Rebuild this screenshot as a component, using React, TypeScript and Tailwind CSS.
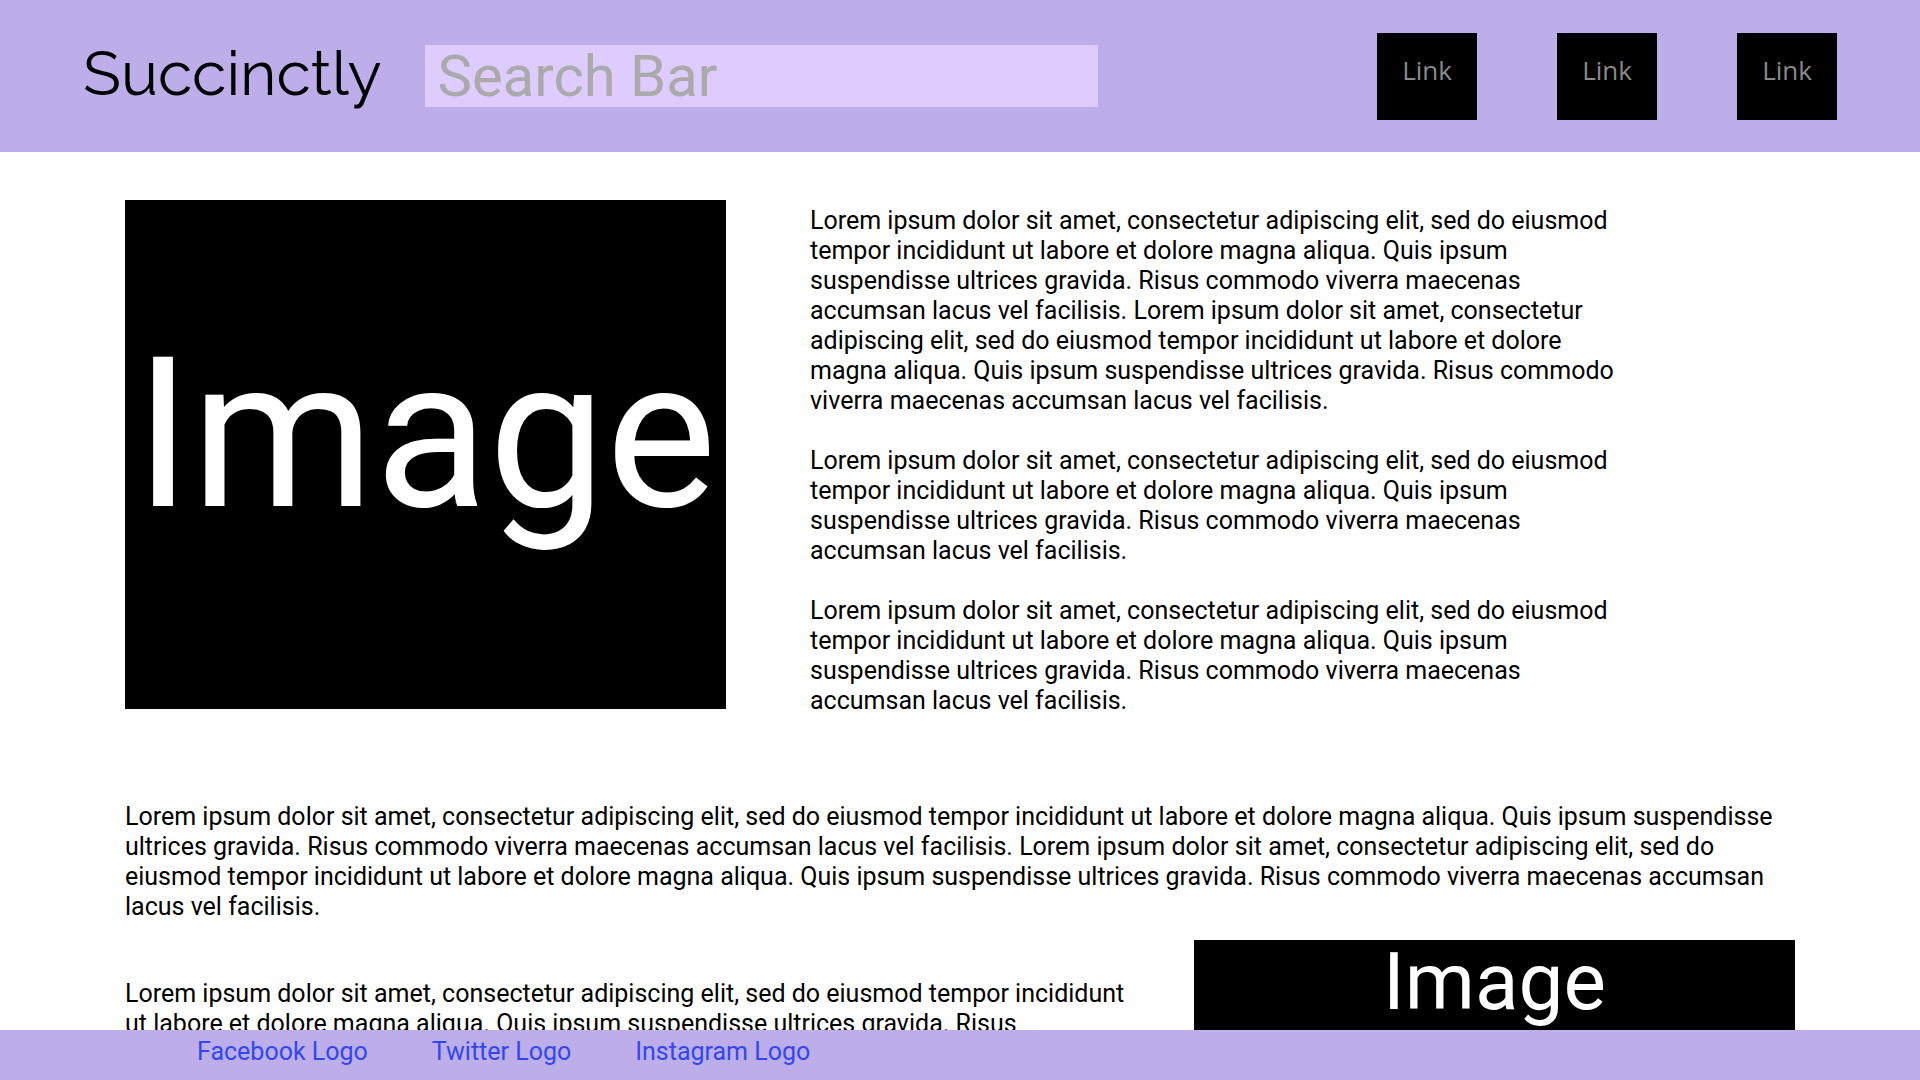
const lorem =
  'Lorem ipsum dolor sit amet, consectetur adipiscing elit, sed do eiusmod tempor incididunt ut labore et dolore magna aliqua. Quis ipsum suspendisse ultrices gravida. Risus commodo viverra maecenas accumsan lacus vel facilisis.';

const Header = () => (
  <header className="flex items-center h-[152px] bg-[#bdaeea] px-[83px]">
    <h1 className="font-['Raleway','Lato',sans-serif] font-normal text-[62.5px] leading-none text-black pb-[6px]">
      Succinctly
    </h1>
    <input
      placeholder="Search Bar"
      className="ml-[43px] w-[673px] h-[62px] bg-[#ddccfd] px-[13px] font-['Roboto',sans-serif] text-[58px] placeholder:text-[#aaaaaa] outline-none"
    />
    <nav className="ml-auto flex gap-[80px]">
      {['Link', 'Link', 'Link'].map((label, i) => (
        <a
          key={i}
          href="#"
          className="flex w-[100px] h-[87px] items-center justify-center bg-black pb-[12px] font-['Open_Sans',sans-serif] text-[26px] text-[#8a8a8a]"
        >
          {label}
        </a>
      ))}
    </nav>
  </header>
);

const Footer = () => (
  <footer className="fixed bottom-0 left-0 right-0 flex h-[50px] items-center gap-[64px] bg-[#bdaeea] pl-[197px] pb-[6px] font-['Roboto',sans-serif]">
    <a href="#" className="text-[25px] text-[#3047f2]">Facebook Logo</a>
    <a href="#" className="text-[25px] text-[#3047f2]">Twitter Logo</a>
    <a href="#" className="text-[25px] text-[#3047f2]">Instagram Logo</a>
  </footer>
);

export default function App() {
  return (
    <div className="min-h-screen bg-white font-['Roboto',sans-serif] text-black">
      <Header />

      <main className="px-[125px] pt-[48px] pb-[80px]">
        <section className="flex gap-[84px]">
          <div className="flex w-[601px] h-[509px] shrink-0 items-center justify-center bg-black pb-[40px]">
            <span className="text-[209px] leading-none text-white">Image</span>
          </div>
          <div className="mt-[6px] w-[820px] space-y-[30px] text-[25px] leading-[30px]">
            <p>
              {lorem} Lorem ipsum dolor sit amet, consectetur adipiscing elit, sed do eiusmod tempor incididunt ut labore et
              dolore magna aliqua. Quis ipsum suspendisse ultrices gravida. Risus commodo viverra maecenas accumsan lacus vel
              facilisis.
            </p>
            <p>{lorem}</p>
            <p>{lorem}</p>
          </div>
        </section>

        <p className="mt-[86px] text-[25px] leading-[30px]">
          {lorem} Lorem ipsum dolor sit amet, consectetur adipiscing elit, sed do eiusmod tempor incididunt ut labore et dolore
          magna aliqua. Quis ipsum suspendisse ultrices gravida. Risus commodo viverra maecenas accumsan lacus vel facilisis.
        </p>

        <section className="mt-[18px] flex justify-between">
          <p className="mt-[39px] w-[1010px] text-[25px] leading-[30px]">
            {lorem} {lorem}
          </p>
          <div className="flex w-[601px] h-[509px] shrink-0 justify-center bg-black">
            <span className="text-[80px] leading-[84px] text-white">Image</span>
          </div>
        </section>
      </main>

      <Footer />
    </div>
  );
}
